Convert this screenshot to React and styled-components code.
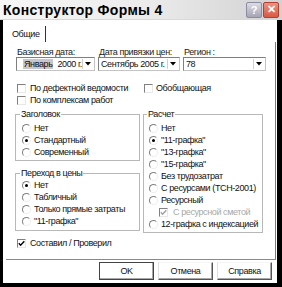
import React from "react";
import styled, { createGlobalStyle } from "styled-components";

const GlobalStyle = createGlobalStyle`
  * { box-sizing: border-box; }
  body {
    margin: 0;
    background: #fff;
    font-family: "Liberation Sans", Arial, sans-serif;
  }
`;

const Window = styled.div`
  width: 282px;
  height: 287px;
  display: flex;
  flex-direction: column;
  background: #fff;
  overflow: hidden;
  letter-spacing: -0.4px;
`;

const TitleBar = styled.div`
  height: 20px;
  display: flex;
  align-items: center;
  justify-content: space-between;
  padding: 0 3px 0 3px;
  background: linear-gradient(to right, #f6f6f6 0%, #ececec 50%, #d2d2d4 100%);
  border-bottom: 1px solid #d8d8d8;
`;

const Title = styled.div`
  font-size: 14px;
  font-weight: bold;
  color: #000;
  letter-spacing: 0.3px;
`;

const CaptionButtons = styled.div`
  display: flex;
  gap: 1px;
  letter-spacing: 0;
`;

const CaptionButton = styled.div`
  width: 16px;
  height: 16px;
  border-radius: 2px;
  display: flex;
  align-items: center;
  justify-content: center;
  color: #fff;
  font-size: 11px;
  font-weight: bold;
  border: 1px solid ${(p) => (p.$close ? "#b04030" : "#8c8ca0")};
  background: ${(p) =>
    p.$close
      ? "linear-gradient(#f09080, #d85a44)"
      : "linear-gradient(#dcdce6, #a4a4b4)"};
`;

const Frame = styled.div`
  flex: 1;
  display: flex;
  flex-direction: column;
  border-left: 3px solid #000;
  border-right: 5px solid #000;
  border-bottom: 4px solid #000;
  background: #fff;
`;

const TabStrip = styled.div`
  height: 22px;
  display: flex;
  align-items: flex-end;
  padding-left: 7px;
`;

const Tab = styled.div`
  height: 16px;
  display: flex;
  align-items: center;
  padding: 0 5px 0 2px;
  border-right: 1px solid #333;
  font-size: 9px;
  color: #111;
`;

const Panel = styled.div`
  height: 218px;
  margin: 0 1px 0 3px;
  padding: 5px 0 0 10px;
  border-right: 1px solid #7a7a7a;
  border-bottom: 1px solid #8a8a8a;
  display: flex;
  flex-direction: column;
`;

const FieldGrid = styled.div`
  display: grid;
  grid-template-columns: 79px 82px 83px;
  column-gap: 3px;
`;

const FieldLabel = styled.div`
  font-size: 9px;
  line-height: 10px;
  height: 10px;
  color: #222;
  padding-left: 1px;
  white-space: nowrap;
`;

const Combo = styled.div`
  height: 14px;
  display: flex;
  align-items: center;
  border: 1px solid;
  border-color: #7f7f7f #c4c4c4 #c4c4c4 #7f7f7f;
  font-size: 9px;
  color: #111;
  padding-left: 2px;
  white-space: nowrap;
`;

const ComboText = styled.span`
  flex: 1;
  overflow: hidden;
`;

const Highlight = styled.span`
  background: #c6c6d0;
  padding: 0 1px;
  margin: 0 4px 0 4px;
`;

const DropButton = styled.div`
  width: 11px;
  height: 10px;
  margin-right: 1px;
  border-left: 1px solid #d0d0d0;
  display: flex;
  align-items: center;
  justify-content: center;
`;

const CheckGrid = styled.div`
  display: grid;
  grid-template-columns: 127px auto;
  margin-top: 11px;
  padding-left: 1px;
`;

const OptionRow = styled.div`
  height: 12px;
  display: flex;
  align-items: center;
  gap: ${(p) => p.$gap || 4}px;
  font-size: 9px;
  color: ${(p) => (p.$disabled ? "#a8a8a8" : "#111")};
  white-space: nowrap;
  padding-left: ${(p) => p.$indent || 0}px;
`;

const CheckBox = styled.div`
  width: 9px;
  height: 9px;
  flex: none;
  border: 1px solid;
  border-color: #808080 #e8e8e8 #e8e8e8 #808080;
  display: flex;
  align-items: center;
  justify-content: center;
`;

const Radio = styled.div`
  width: 9px;
  height: 9px;
  flex: none;
  border-radius: 50%;
  border: 1px solid;
  border-color: #808080 #eeeeee #eeeeee #808080;
  display: flex;
  align-items: center;
  justify-content: center;
  &::after {
    content: "";
    width: 3px;
    height: 3px;
    border-radius: 50%;
    background: ${(p) => (p.$on ? "#000" : "transparent")};
  }
`;

const Columns = styled.div`
  display: grid;
  grid-template-columns: 125px 120px;
  column-gap: 3px;
  margin: 3px 0 0 -1px;
  align-items: start;
`;

const Column = styled.div`
  display: flex;
  flex-direction: column;
`;

const Group = styled.fieldset`
  margin: ${(p) => p.$top || 0}px 0 0 0;
  padding: ${(p) => p.$pad || "3px 0 2px 6px"};
  border: 1px solid #b8b8b8;
  min-width: 0;
`;

const GroupTitle = styled.legend`
  font-size: 9px;
  line-height: 10px;
  height: 10px;
  padding: 0 1px;
  margin-left: -2px;
  color: #111;
`;

const Footer = styled.div`
  margin-top: 4px;
  padding-left: 1px;
`;

const ButtonBar = styled.div`
  display: flex;
  justify-content: flex-end;
  gap: 4px;
  padding: 2px 5px 0 0;
`;

const Button = styled.div`
  width: 55px;
  height: 18px;
  display: flex;
  align-items: center;
  justify-content: center;
  font-size: 9px;
  color: #111;
  border: 1px solid;
  border-color: ${(p) =>
    p.$default ? "#444" : "#f4f4f4 #555 #555 #e0e0e0"};
  box-shadow: inset -1px -1px #a8a8a8;
`;

const Arrow = () => (
  <svg width="6" height="4" viewBox="0 0 6 4">
    <path d="M0 0H6L3 3.5Z" fill="#000" />
  </svg>
);

const Tick = ({ color }) => (
  <svg width="7" height="7" viewBox="0 0 7 7">
    <path d="M0.8 3.2L2.6 5.2L6.3 1.2" stroke={color} strokeWidth="1.4" fill="none" />
  </svg>
);

const Check = ({ label, checked, disabled, indent, gap }) => (
  <OptionRow $disabled={disabled} $indent={indent} $gap={gap}>
    <CheckBox>{checked && <Tick color={disabled ? "#a0a0a0" : "#000"} />}</CheckBox>
    {label}
  </OptionRow>
);

const Option = ({ label, on }) => (
  <OptionRow $gap={3}>
    <Radio $on={on} />
    {label}
  </OptionRow>
);

const header = ["Нет", "Стандартный", "Современный"];
const prices = ["Нет", "Табличный", "Только прямые затраты", "\"11-графка\""];
const calc = [
  "Нет",
  "\"11-графка\"",
  "\"13-графка\"",
  "\"15-графка\"",
  "Без трудозатрат",
  "С ресурсами (ТСН-2001)",
  "Ресурсный",
];

export default function App() {
  return (
    <>
      <GlobalStyle />
      <Window>
        <TitleBar>
          <Title>Конструктор Формы 4</Title>
          <CaptionButtons>
            <CaptionButton>?</CaptionButton>
            <CaptionButton $close>✕</CaptionButton>
          </CaptionButtons>
        </TitleBar>
        <Frame>
          <TabStrip>
            <Tab>Общие</Tab>
          </TabStrip>
          <Panel>
            <FieldGrid>
              <FieldLabel>Базисная дата:</FieldLabel>
              <FieldLabel>Дата привязки цен:</FieldLabel>
              <FieldLabel>Регион :</FieldLabel>
              <Combo>
                <ComboText>
                  <Highlight>Январь</Highlight>2000 г.
                </ComboText>
                <DropButton><Arrow /></DropButton>
              </Combo>
              <Combo>
                <ComboText>Сентябрь 2005 г.</ComboText>
                <DropButton><Arrow /></DropButton>
              </Combo>
              <Combo>
                <ComboText>78</ComboText>
                <DropButton><Arrow /></DropButton>
              </Combo>
            </FieldGrid>

            <CheckGrid>
              <Check label="По дефектной ведомости" />
              <Check label="Обобщающая" gap={3} />
              <Check label="По комплексам работ" />
            </CheckGrid>

            <Columns>
              <Column>
                <Group>
                  <GroupTitle>Заголовок</GroupTitle>
                  {header.map((t, i) => (
                    <Option key={t} label={t} on={i === 1} />
                  ))}
                </Group>
                <Group $top={7} $pad="1px 0 3px 6px">
                  <GroupTitle>Переход в цены</GroupTitle>
                  {prices.map((t, i) => (
                    <Option key={t} label={t} on={i === 0} />
                  ))}
                </Group>
              </Column>
              <Column>
                <Group $pad="3px 0 2px 5px">
                  <GroupTitle>Расчет</GroupTitle>
                  {calc.map((t, i) => (
                    <Option key={t} label={t} on={i === 1} />
                  ))}
                  <Check label="С ресурсной сметой" checked disabled indent={10} gap={5} />
                  <Option label="12-графка с индексацией" />
                </Group>
              </Column>
            </Columns>

            <Footer>
              <Check label="Составил / Проверил" checked />
            </Footer>
          </Panel>
          <ButtonBar>
            <Button $default>OK</Button>
            <Button>Отмена</Button>
            <Button>Справка</Button>
          </ButtonBar>
        </Frame>
      </Window>
    </>
  );
}
